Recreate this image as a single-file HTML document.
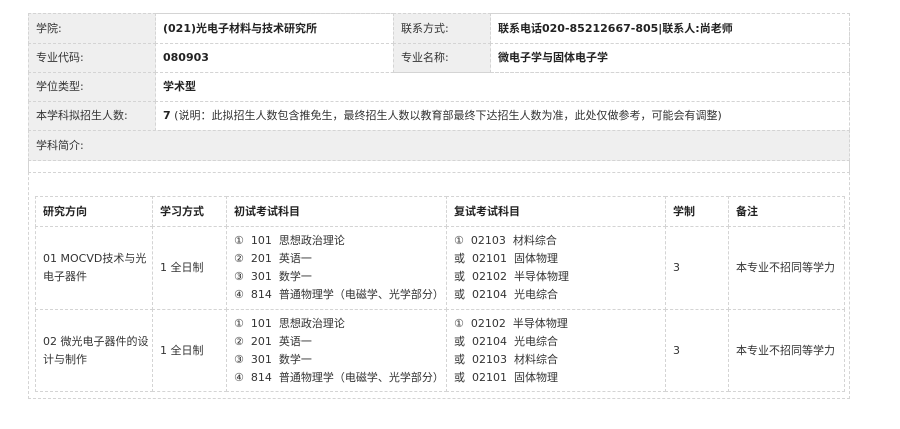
<!DOCTYPE html>
<html><head><meta charset="utf-8"><style>
body{margin:0;width:900px;height:429px;background:#fff;font-family:"DejaVu Sans","Noto Sans CJK SC",sans-serif;font-size:11px;color:#333;position:relative;overflow:hidden}
.c{position:absolute;box-sizing:border-box;border:1px dashed #d4d4d4;display:flex;align-items:center;padding-left:7px;line-height:18px;white-space:nowrap}
.g{background:#efefef}
.b{font-weight:bold;color:#222}
</style></head><body>
<div class="c" style="left:28px;top:13px;width:822px;height:386px;border-color:#d4d4d4"></div>
<div class="c g" style="left:28px;top:13px;width:128px;height:31px">学院:</div>
<div class="c b" style="left:155px;top:13px;width:239px;height:31px">(021)光电子材料与技术研究所</div>
<div class="c g" style="left:393px;top:13px;width:98px;height:31px">联系方式:</div>
<div class="c b" style="left:490px;top:13px;width:360px;height:31px">联系电话020-85212667-805|联系人:尚老师</div>
<div class="c g" style="left:28px;top:43px;width:128px;height:30px">专业代码:</div>
<div class="c b" style="left:155px;top:43px;width:239px;height:30px">080903</div>
<div class="c g" style="left:393px;top:43px;width:98px;height:30px">专业名称:</div>
<div class="c b" style="left:490px;top:43px;width:360px;height:30px">微电子学与固体电子学</div>
<div class="c g" style="left:28px;top:72px;width:128px;height:30px">学位类型:</div>
<div class="c b" style="left:155px;top:72px;width:695px;height:30px">学术型</div>
<div class="c g" style="left:28px;top:101px;width:128px;height:30px">本学科拟招生人数:</div>
<div class="c" style="left:155px;top:101px;width:695px;height:30px"><b style="color:#222">7</b>&nbsp;(说明：此拟招生人数包含推免生，最终招生人数以教育部最终下达招生人数为准，此处仅做参考，可能会有调整)</div>
<div class="c g" style="left:28px;top:130px;width:822px;height:31px">学科简介:</div>
<div class="c" style="left:28px;top:160px;width:822px;height:13px"></div>
<div class="c b" style="left:35px;top:196px;width:118px;height:31px">研究方向</div>
<div class="c b" style="left:152px;top:196px;width:75px;height:31px">学习方式</div>
<div class="c b" style="left:226px;top:196px;width:221px;height:31px">初试考试科目</div>
<div class="c b" style="left:446px;top:196px;width:220px;height:31px">复试考试科目</div>
<div class="c b" style="left:665px;top:196px;width:64px;height:31px">学制</div>
<div class="c b" style="left:728px;top:196px;width:117px;height:31px">备注</div>

<div class="c" style="left:35px;top:226px;width:118px;height:84px">01 MOCVD技术与光<br>电子器件</div>
<div class="c" style="left:152px;top:226px;width:75px;height:84px">1 全日制</div>
<div class="c" style="left:226px;top:226px;width:221px;height:84px"><div>①&nbsp; 101&nbsp; 思想政治理论<br>②&nbsp; 201&nbsp; 英语一<br>③&nbsp; 301&nbsp; 数学一<br>④&nbsp; 814&nbsp; 普通物理学（电磁学、光学部分）</div></div>
<div class="c" style="left:446px;top:226px;width:220px;height:84px"><div>①&nbsp; 02103&nbsp; 材料综合<br>或&nbsp; 02101&nbsp; 固体物理<br>或&nbsp; 02102&nbsp; 半导体物理<br>或&nbsp; 02104&nbsp; 光电综合</div></div>
<div class="c" style="left:665px;top:226px;width:64px;height:84px">3</div>
<div class="c" style="left:728px;top:226px;width:117px;height:84px">本专业不招同等学力</div>

<div class="c" style="left:35px;top:309px;width:118px;height:83px">02 微光电子器件的设<br>计与制作</div>
<div class="c" style="left:152px;top:309px;width:75px;height:83px">1 全日制</div>
<div class="c" style="left:226px;top:309px;width:221px;height:83px"><div>①&nbsp; 101&nbsp; 思想政治理论<br>②&nbsp; 201&nbsp; 英语一<br>③&nbsp; 301&nbsp; 数学一<br>④&nbsp; 814&nbsp; 普通物理学（电磁学、光学部分）</div></div>
<div class="c" style="left:446px;top:309px;width:220px;height:83px"><div>①&nbsp; 02102&nbsp; 半导体物理<br>或&nbsp; 02104&nbsp; 光电综合<br>或&nbsp; 02103&nbsp; 材料综合<br>或&nbsp; 02101&nbsp; 固体物理</div></div>
<div class="c" style="left:665px;top:309px;width:64px;height:83px">3</div>
<div class="c" style="left:728px;top:309px;width:117px;height:83px">本专业不招同等学力</div>
</body></html>
